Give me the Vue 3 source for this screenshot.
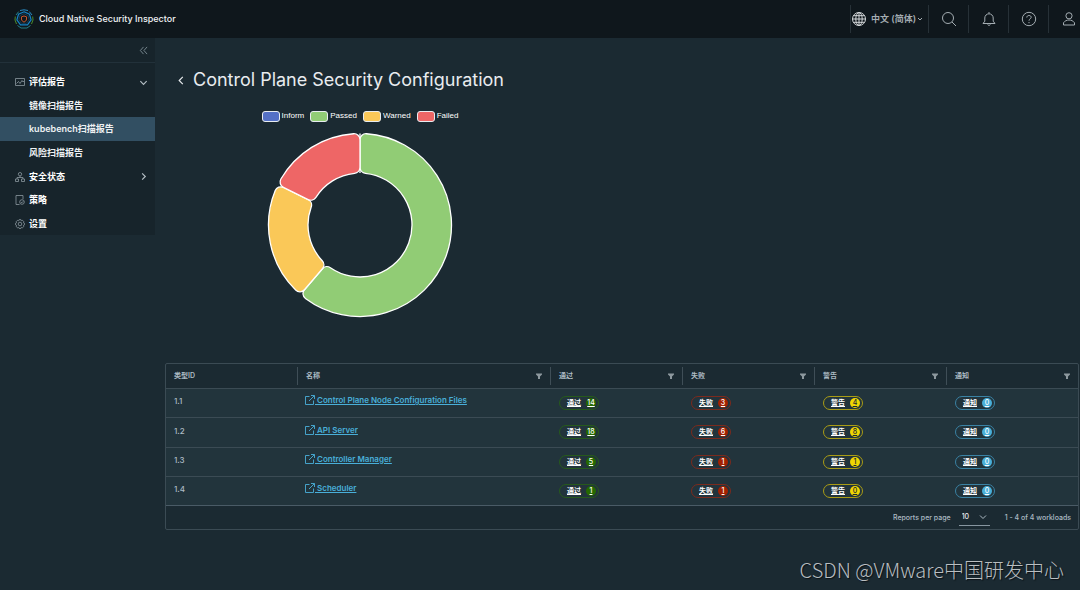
<script setup>
import { ref } from 'vue'

const pageSize = ref('10')

const series = [
  { name: 'Inform', value: 0, color: '#5470c6' },
  { name: 'Passed', value: 38, color: '#91cc75' },
  { name: 'Warned', value: 13, color: '#fac858' },
  { name: 'Failed', value: 11, color: '#ee6666' },
]

const rows = [
  { id: '1.1', name: 'Control Plane Node Configuration Files', counts: [14, 3, 4, 0] },
  { id: '1.2', name: 'API Server', counts: [18, 6, 8, 0] },
  { id: '1.3', name: 'Controller Manager', counts: [5, 1, 1, 0] },
  { id: '1.4', name: 'Scheduler', counts: [1, 1, 0, 0] },
]

const kinds = [
  { key: 'pass', label: '通过' },
  { key: 'fail', label: '失败' },
  { key: 'warn', label: '警告' },
  { key: 'info', label: '通知' },
]

const OUTER = 91.5
const INNER = 52
const CORNER = 6

function point(radius, angle) {
  return `${(radius * Math.sin(angle)).toFixed(2)} ${(-radius * Math.cos(angle)).toFixed(2)}`
}

function sector(a0, a1) {
  if (a1 - a0 < 0.001) return `M${point(INNER, a0)}L${point(OUTER, a0)}`
  const large = a1 - a0 > Math.PI ? 1 : 0
  const dOut = Math.asin(CORNER / (OUTER - CORNER))
  const dIn = Math.asin(CORNER / (INNER + CORNER))
  const rOut = Math.sqrt((OUTER - CORNER) ** 2 - CORNER ** 2)
  const rIn = Math.sqrt((INNER + CORNER) ** 2 - CORNER ** 2)
  const c = `A${CORNER} ${CORNER} 0 0 1 `
  return (
    `M${point(rIn, a0)}L${point(rOut, a0)}${c}${point(OUTER, a0 + dOut)}` +
    `A${OUTER} ${OUTER} 0 ${large} 1 ${point(OUTER, a1 - dOut)}${c}${point(rOut, a1)}` +
    `L${point(rIn, a1)}${c}${point(INNER, a1 - dIn)}` +
    `A${INNER} ${INNER} 0 ${large} 0 ${point(INNER, a0 + dIn)}${c}${point(rIn, a0)}Z`
  )
}

const total = series.reduce((sum, s) => sum + s.value, 0)
let angle = 0
const slices = series.map((s) => {
  const start = angle
  angle += (s.value / total) * Math.PI * 2
  return { ...s, d: sector(start, angle) }
})
</script>

<template>
  <div class="page">
    <header class="topbar">
      <a class="brand" href="#">
        <svg class="logo" viewBox="0 0 20 20" fill="none">
          <path d="M6 1.5 10 .8l4 .7M15.3 2.6 18 6" stroke="#2b8ac0" />
          <path d="M18.7 7.5 19 11l-1.5 4M1.3 7.5 1 11l1.5 4" stroke="#4c8b2b" />
          <path d="M4.700 2.600 2 6M3.500 16.500 7 19h6l3.500-2.500" stroke="#247f87" />
          <path d="m10 2.800 5.500 2.500 1.600 5.600-3.600 5H6.500l-3.600-5 1.600-5.600z" stroke="#1683c5" stroke-width="1.200" />
          <path d="m10 4.700 4.200 2 1 4.100-2.800 3.500H7.600l-2.800-3.500 1-4.100z" stroke="#123c58" />
          <path d="m10 7 2.500.8V10c0 1.500-1 2.400-2.500 3.100-1.500-.7-2.500-1.600-2.500-3.100V7.800z" stroke="#c2562f" />
        </svg>
        <span>Cloud Native Security Inspector</span>
      </a>
      <div class="tools">
        <button class="lang" type="button">
          <svg class="globe" viewBox="0 0 16 16" fill="none" stroke="currentColor">
            <circle cx="8" cy="8" r="6.500" /><ellipse cx="8" cy="8" rx="3.200" ry="6.500" /><path d="M8 1.500v13M1.500 8h13M2.500 4.700h11M2.500 11.300h11" />
          </svg>
          <span>中文 (简体)</span>
          <svg class="tiny" viewBox="0 0 6 6" fill="none" stroke="currentColor"><path d="m1 2 2 2 2-2" /></svg>
        </button>
        <button class="tool" type="button" aria-label="Search">
          <svg viewBox="0 0 16 16" fill="none" stroke="currentColor"><circle cx="7" cy="7" r="5.500" /><path d="m11 11 4 4" /></svg>
        </button>
        <button class="tool" type="button" aria-label="Notifications">
          <svg viewBox="0 0 16 16" fill="none" stroke="currentColor"><path d="M8 1v1.500M2 12.500h12l-1.800-2.300V7A4.200 4.200 0 0 0 3.800 7v3.200zM6.700 13.500a1.400 1.400 0 0 0 2.600 0" /></svg>
        </button>
        <button class="tool" type="button" aria-label="Help">
          <svg viewBox="0 0 16 16" fill="none" stroke="currentColor"><circle cx="8" cy="8" r="6.700" /><path d="M5.800 6.500C5.900 5 6.900 4.500 8 4.500c1.300 0 2.200.7 2.200 1.800C10.200 7.800 8 7.800 8 9.700M8 11v1.200" /></svg>
        </button>
        <button class="tool" type="button" aria-label="Account">
          <svg viewBox="0 0 16 16" fill="none" stroke="currentColor"><circle cx="8" cy="4.800" r="3.100" /><path d="M2.500 14v-2.200C3.800 9.900 5.700 9 8 9s4.200.9 5.500 2.800V14z" /></svg>
        </button>
      </div>
    </header>

    <div class="body">
      <nav class="sidebar">
        <button class="collapse" type="button" aria-label="Collapse">
          <svg viewBox="0 0 10 10" fill="none" stroke="currentColor"><path d="M5 1 1.500 5 5 9M9 1 5.500 5 9 9" /></svg>
        </button>
        <div class="menu">
          <a class="item" href="#">
            <svg viewBox="0 0 10 10" fill="none" stroke="currentColor" stroke-width=".8"><path d="M.5 1.500h9v7h-9zM1.500 6.500l2-2 1.500 2 2-3 1 1.500 1-1" /></svg>
            <span>评估报告</span>
            <svg class="caret" viewBox="0 0 10 10" fill="none" stroke="currentColor" stroke-width="1.300"><path d="m1.500 3.500 3.500 3.500 3.500-3.500" /></svg>
          </a>
          <a class="item sub" href="#">镜像扫描报告</a>
          <a class="item sub active" href="#">kubebench扫描报告</a>
          <a class="item sub" href="#">风险扫描报告</a>
          <a class="item" href="#">
            <svg viewBox="0 0 10 10" fill="none" stroke="currentColor" stroke-width=".8"><circle cx="5" cy="2.200" r="1.700" /><path d="M5 4v1.500M2 7V5.500h6V7M.5 7h3v2.500h-3zM6.500 7h3v2.500h-3z" /></svg>
            <span>安全状态</span>
            <svg class="caret" viewBox="0 0 10 10" fill="none" stroke="currentColor" stroke-width="1.300"><path d="M3.500 1.500 7 5 3.500 8.500" /></svg>
          </a>
          <a class="item" href="#">
            <svg viewBox="0 0 10 10" fill="none" stroke="currentColor" stroke-width=".8"><path d="M4.500 9.500H1v-9h7V4" /><circle cx="7" cy="7" r="2.300" /><path d="m6 7 .8.8L8.200 6.300" /></svg>
            <span>策略</span>
          </a>
          <a class="item" href="#">
            <svg viewBox="0 0 10 10" fill="none" stroke="currentColor" stroke-width=".8"><path d="m4 .7 2 0 .4 1 1.200-.3 1.200 1.300-.3 1.100 1 .5v1.500l-1 .5.3 1.200-1.200 1.200-1.200-.3L6 9.400H4l-.4-1-1.200.3-1.200-1.200.3-1.200-1-.5V4.300l1-.5-.3-1.100 1.200-1.300 1.200.3z" /><circle cx="5" cy="5" r="1.800" /></svg>
            <span>设置</span>
          </a>
        </div>
      </nav>

      <main class="content">
        <div class="heading">
          <a class="back" href="#" aria-label="Back">
            <svg viewBox="0 0 8 10" fill="none" stroke="currentColor" stroke-width="1.300"><path d="M6 1 2 5l4 4" /></svg>
          </a>
          <h1>Control Plane Security Configuration</h1>
        </div>

        <figure class="chart">
          <figcaption class="legend">
            <span v-for="s in series" :key="s.name" class="key">
              <i class="swatch" :style="{ background: s.color }"></i>{{ s.name }}
            </span>
          </figcaption>
          <svg class="donut" viewBox="-93 -93 186 186" role="img" aria-label="Check results">
            <path v-for="s in slices" :key="s.name" :d="s.d" :fill="s.color" stroke="#fff" stroke-width="1.300" />
          </svg>
        </figure>

        <section class="grid">
          <table>
            <colgroup>
              <col class="first" /><col /><col class="narrow" /><col class="narrow" /><col class="narrow" /><col class="narrow" />
            </colgroup>
            <thead>
              <tr>
                <th scope="col"><div class="th">类型ID</div></th>
                <th v-for="label in ['名称', ...kinds.map((k) => k.label)]" :key="label" scope="col">
                  <div class="th">
                    {{ label }}
                    <button class="filter" type="button" :aria-label="'Filter ' + label">
                      <svg viewBox="0 0 6 6"><path d="M0 .5h6v1L4 3.500V6H2V3.500L0 1.500z" fill="currentColor" /></svg>
                    </button>
                  </div>
                </th>
              </tr>
            </thead>
            <tbody>
              <tr v-for="row in rows" :key="row.id">
                <td>{{ row.id }}</td>
                <td>
                  <a class="link" href="#">
                    <svg viewBox="0 0 10 10" fill="none" stroke="currentColor" stroke-width=".9"><path d="M4.500 1.500h-4v8h8v-4M6 .5h3.500V4M9.300.7 4 6" /></svg>
                    <span>&nbsp;{{ row.name }}</span>
                  </a>
                </td>
                <td v-for="(kind, i) in kinds" :key="kind.key">
                  <a class="badge" :class="kind.key" href="#">
                    <span>{{ kind.label }}</span><b>{{ row.counts[i] }}</b>
                  </a>
                </td>
              </tr>
            </tbody>
          </table>
          <footer class="pager">
            <label for="page-size">Reports per page</label>
            <span class="select">
              <select id="page-size" v-model="pageSize">
                <option>10</option>
                <option>20</option>
                <option>50</option>
              </select>
              <svg viewBox="0 0 8 8" fill="none" stroke="currentColor"><path d="m1 2.500 3 3 3-3" /></svg>
            </span>
            <span>1 - 4 of 4 workloads</span>
          </footer>
        </section>
      </main>
    </div>
    <div class="watermark">CSDN @VMware中国研发中心</div>
  </div>
</template>

<style>
body {
  background: #1b2a32;
}
</style>

<style scoped>
.page {
  min-height: 100vh;
  background: #1b2a32;
  color: #adbbc4;
  font-family: Inter, "Noto Sans CJK SC", sans-serif;
  font-size: 8px;
  line-height: 12px;
}
.page * {
  box-sizing: border-box;
}
svg {
  display: block;
  flex: none;
}
a {
  color: inherit;
  text-decoration: none;
}
button {
  padding: 0;
  border: 0;
  background: none;
  color: inherit;
  font: inherit;
}
.topbar {
  display: flex;
  align-items: center;
  justify-content: space-between;
  height: 38px;
  background: #0f171c;
  overflow: hidden;
}
.brand {
  display: flex;
  align-items: center;
  gap: 5px;
  padding-left: 14px;
  color: #f0f2f4;
  font-size: 9px;
  font-weight: 500;
}
.logo {
  width: 20px;
  height: 20px;
}
.tools {
  display: flex;
  height: 28px;
  margin-right: -8px;
  color: #a4adb2;
}
.lang {
  display: flex;
  align-items: center;
  gap: 4px;
  width: 78px;
  border-left: 1px solid #273137;
  font-size: 9px;
  font-weight: 600;
  white-space: nowrap;
}
.globe {
  width: 16px;
  height: 16px;
  color: #d4d8da;
}
.tiny {
  width: 6px;
  height: 6px;
  margin-left: -3px;
}
.tool {
  display: flex;
  align-items: center;
  justify-content: center;
  width: 40px;
  border-left: 1px solid #273137;
}
.tool svg {
  width: 16px;
  height: 16px;
}
.body {
  display: flex;
  align-items: flex-start;
}
.sidebar {
  flex: none;
  width: 155px;
  background: #17242b;
}
.collapse {
  display: flex;
  align-items: center;
  justify-content: flex-end;
  width: 100%;
  height: 25px;
  padding-right: 7px;
  border-bottom: 1px solid #22313a;
  color: #7f8e96;
}
.collapse svg {
  width: 9px;
  height: 9px;
}
.menu {
  display: grid;
  grid-auto-rows: 1fr;
  height: 172px;
  padding-top: 7px;
}
.item {
  display: flex;
  align-items: center;
  gap: 4px;
  padding: 1px 7px 0 15px;
  color: #fff;
  font-size: 9px;
  font-weight: 700;
}
.item svg {
  width: 10px;
  height: 10px;
  color: #8b989f;
}
.item .caret {
  width: 9px;
  height: 9px;
  margin-left: auto;
  color: #b4bec4;
}
.sub {
  padding-left: 29px;
  color: #eef1f3;
  font-weight: 600;
}
.active {
  background: #324f62;
}
.content {
  flex: 1;
  min-width: 0;
  padding: 27px 1px 0 10px;
}
.heading {
  display: flex;
  align-items: center;
  gap: 8px;
  height: 30px;
  padding-left: 12px;
  color: #e9ecef;
}
.back svg {
  width: 8px;
  height: 9px;
}
h1 {
  margin: 0;
  font-size: 18px;
  font-weight: 400;
  line-height: 24px;
}
.chart {
  display: flex;
  flex-direction: column;
  align-items: center;
  width: 390px;
  height: 268px;
  margin: 0;
  padding-top: 15px;
}
.legend {
  display: flex;
  gap: 6px;
  color: #fff;
  font-family: "Liberation Sans", sans-serif;
}
.key {
  display: flex;
  align-items: center;
  gap: 2px;
}
.swatch {
  width: 18px;
  height: 11px;
  border: 1px solid #e8ecf0;
  border-radius: 3px;
}
.donut {
  width: 186px;
  height: 186px;
  margin-top: 10px;
}
.grid {
  border: 1px solid #3b4b54;
  border-radius: 2px;
}
table {
  width: 100%;
  table-layout: fixed;
  border-collapse: collapse;
}
.first {
  width: 131px;
}
.narrow {
  width: 132px;
}
th {
  height: 24px;
  padding: 0;
  font-weight: 600;
  text-align: left;
}
.th {
  display: flex;
  align-items: center;
  justify-content: space-between;
  height: 18px;
  padding: 0 8px;
  border-left: 1px solid #3f4e57;
  font-size: 7px;
}
th:first-child .th {
  border-left: 0;
}
.filter {
  color: #8d989e;
}
.filter svg {
  width: 6px;
  height: 6px;
}
tbody {
  background: #22343c;
}
td {
  height: 29px;
  padding: 0 9px;
  border-top: 1px solid #3b4b54;
  white-space: nowrap;
}
tr:nth-child(2) td {
  height: 30px;
}
td:nth-child(-n + 2) {
  padding: 0 8px 3px;
  font-weight: 500;
}
.link {
  display: inline-flex;
  align-items: center;
  color: #49afd9;
  font-weight: 600;
}
.link span {
  text-decoration: underline;
}
.link svg {
  width: 10px;
  height: 10px;
}
.badge {
  display: inline-flex;
  align-items: center;
  gap: 5px;
  height: 14px;
  padding: 0 2px 0 7px;
  border: 1px solid;
  border-radius: 7px;
  font-size: 7px;
  vertical-align: middle;
}
.badge span {
  color: #fff;
  font-weight: 600;
  text-decoration: underline;
}
.badge b {
  min-width: 10px;
  height: 10px;
  padding: 0 1px;
  border-radius: 5px;
  color: #fff;
  font-weight: 500;
  line-height: 10px;
  text-align: center;
  text-decoration: underline;
}
.pass {
  border-color: #265a1b;
}
.pass b {
  background: #266900;
}
.fail {
  border-color: #7c2a1d;
}
.fail b {
  background: #a32100;
}
.warn {
  border-color: #a99c15;
}
.warn b {
  background: #efd603;
  color: #1b2a32;
}
.info {
  border-color: #3a82a4;
}
.info b {
  background: #49afd9;
}
.pager {
  display: flex;
  align-items: center;
  justify-content: flex-end;
  height: 24px;
  padding-right: 7px;
  border-top: 1px solid #4a5b66;
  font-size: 7px;
  font-weight: 500;
}
.select {
  display: flex;
  align-items: center;
  width: 31px;
  height: 16px;
  margin: 0 15px 0 8px;
  border-bottom: 1px solid #8796a0;
}
.select select {
  flex: 1;
  min-width: 0;
  margin-right: -8px;
  padding: 0 0 0 3px;
  border: 0;
  background: none;
  color: #e9ecef;
  font: inherit;
  appearance: none;
}
.select svg {
  width: 8px;
  height: 8px;
  margin-right: 3px;
  pointer-events: none;
}
.watermark {
  position: absolute;
  right: 16px;
  bottom: 7px;
  color: #b9bec1;
  font-family: "Noto Sans CJK SC", sans-serif;
  font-size: 20px;
  font-weight: 300;
  line-height: 26px;
  text-shadow: 1px 1px 1px #0b1115;
}
</style>
